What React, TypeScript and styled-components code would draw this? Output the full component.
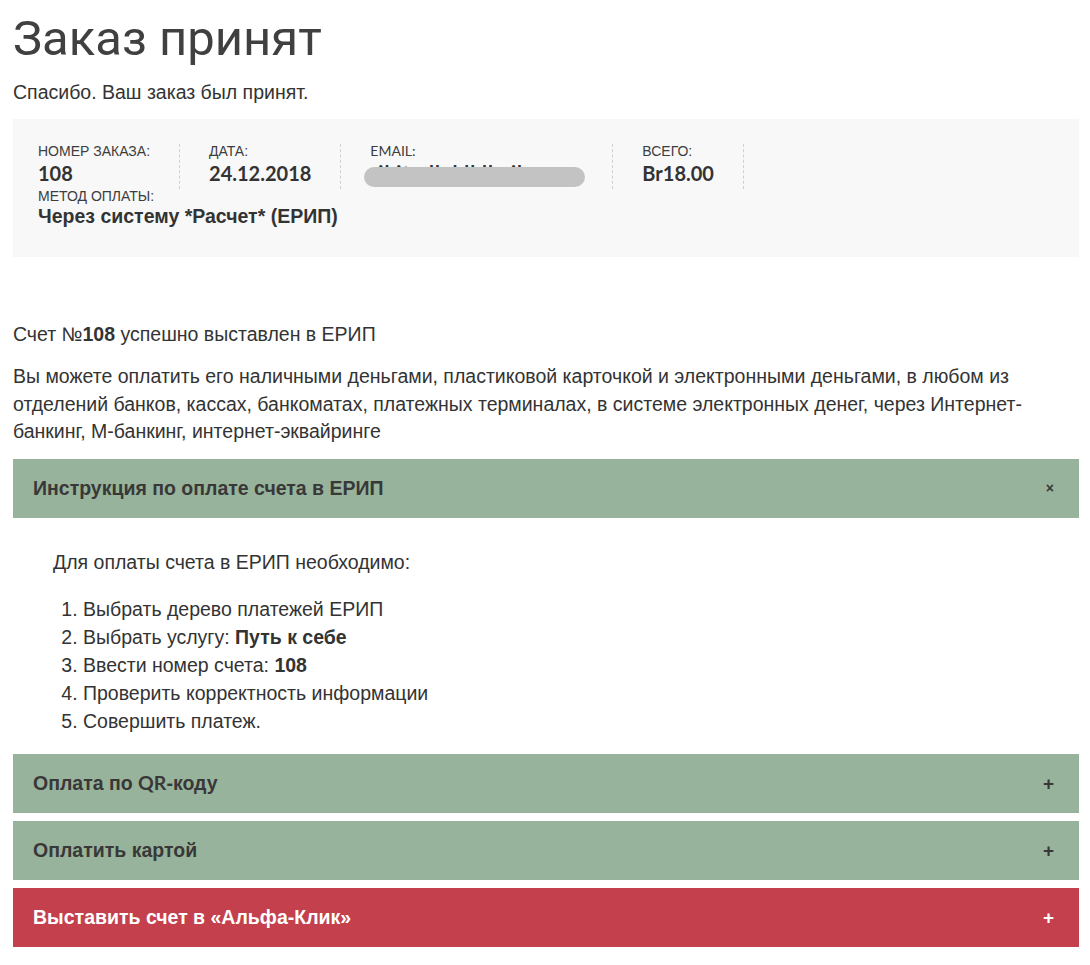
import React from "react";
import styled, { createGlobalStyle } from "styled-components";

const BODY_SIZE = "19.5px";

const Global = createGlobalStyle`
  html, body { margin: 0; padding: 0; background: #fff; }
  body { font-family: "Liberation Sans", Arial, sans-serif; color: #333; }
  * { box-sizing: border-box; }
`;

const Page = styled.div`
  padding: 6px 11px 16px 13px;
`;

const Latin = styled.span<{ $size?: number }>`
  font-family: Lato, sans-serif;
  font-size: ${(p) => (p.$size ? `${p.$size}px` : "inherit")};
`;

const Title = styled.h1`
  margin: 0;
  font-family: Roboto, "Liberation Sans", sans-serif;
  font-weight: 400;
  font-size: 49px;
  line-height: 65px;
  color: #404040;
`;

const Lead = styled.p`
  margin: 8px 0 14px;
  font-size: ${BODY_SIZE};
  line-height: 26px;
  color: #333;
`;

const DetailsBox = styled.div`
  background: #f8f8f8;
  padding: 25px 25px 0;
  height: 138px;
`;

const DetailsList = styled.ul`
  list-style: none;
  margin: 0;
  padding: 0;
  display: flex;
  flex-wrap: wrap;
`;

const DetailItem = styled.li<{ $last?: boolean; $full?: boolean }>`
  display: flex;
  flex-direction: column;
  padding-right: ${(p) => (p.$last ? "0" : "29px")};
  margin-right: ${(p) => (p.$last ? "0" : "29px")};
  border-right: ${(p) => (p.$last ? "none" : "1px dashed #d3ced2")};
  flex-basis: ${(p) => (p.$full ? "100%" : "auto")};
`;

const DetailLabel = styled.span`
  font-size: 14px;
  line-height: 14px;
  text-transform: uppercase;
  color: #3d3d3d;
`;

const DetailValue = styled.strong<{ $tight?: boolean }>`
  font-size: 19.5px;
  line-height: ${(p) => (p.$tight ? "27px" : "30px")};
  font-weight: 700;
  color: #333;
`;

const Blurred = styled.span`
  position: relative;
  display: inline-block;
  vertical-align: top;
  width: 213px;
  height: 30px;
`;

const BlurClip = styled.span`
  position: absolute;
  left: 0;
  top: 0;
  width: 213px;
  height: 30px;
  overflow: hidden;
`;

const HiddenMail = styled.span`
  position: absolute;
  left: 8px;
  top: 0;
  font-family: Lato, sans-serif;
  font-size: 20px;
  letter-spacing: 1px;
  color: #333;
  white-space: nowrap;
`;

const BlurBar = styled.span`
  position: absolute;
  left: -6px;
  top: 9px;
  width: 221px;
  height: 20px;
  border-radius: 10px;
  background: #c3c3c3;
`;

const Notice = styled.p`
  margin: 63px 0 15px;
  font-size: ${BODY_SIZE};
  line-height: 28px;
  color: #333;
  b { font-weight: 700; }
`;

const Para = styled.p`
  margin: 0 0 13px;
  font-size: ${BODY_SIZE};
  line-height: 27.5px;
  color: #333;
`;

const Accordion = styled.div`
  display: flex;
  flex-direction: column;
  gap: 8px;
`;

const Section = styled.section``;

const Header = styled.div<{ $tone: "green" | "red" }>`
  display: flex;
  align-items: center;
  justify-content: space-between;
  height: 59px;
  padding: 0 25px 0 20px;
  background: ${(p) => (p.$tone === "red" ? "#c3404c" : "#98b39b")};
  color: ${(p) => (p.$tone === "red" ? "#fff" : "#383838")};
  font-family: "Liberation Sans", Arial, sans-serif;
  font-weight: 700;
  font-size: 19.5px;
  cursor: pointer;
`;

const Sign = styled.span<{ $small?: boolean }>`
  font-family: "Liberation Sans", Arial, sans-serif;
  font-weight: 700;
  font-size: ${(p) => (p.$small ? "14px" : "19px")};
  line-height: 1;
`;

const Body = styled.div`
  padding: 30px 0 11px 40px;
  font-size: ${BODY_SIZE};
  color: #333;
`;

const BodyIntro = styled.p`
  margin: 0 0 19px;
  line-height: 28px;
`;

const Steps = styled.ol`
  margin: 0;
  padding-left: 30px;
  li { line-height: 28px; }
  b { font-weight: 700; }
`;

export default function App() {
  return (
    <Page>
      <Global />
      <Title>Заказ принят</Title>
      <Lead>Спасибо. Ваш заказ был принят.</Lead>
      <DetailsBox>
        <DetailsList>
          <DetailItem>
            <DetailLabel>Номер заказа:</DetailLabel>
            <DetailValue>
              <Latin $size={20}>108</Latin>
            </DetailValue>
          </DetailItem>
          <DetailItem>
            <DetailLabel>Дата:</DetailLabel>
            <DetailValue>
              <Latin $size={20}>24.12.2018</Latin>
            </DetailValue>
          </DetailItem>
          <DetailItem>
            <DetailLabel>
              <Latin>Email:</Latin>
            </DetailLabel>
            <DetailValue>
              <Blurred>
                <BlurClip>
                  <HiddenMail>il it ulk l ll ll ail</HiddenMail>
                </BlurClip>
                <BlurBar />
              </Blurred>
            </DetailValue>
          </DetailItem>
          <DetailItem>
            <DetailLabel>Всего:</DetailLabel>
            <DetailValue>
              <Latin $size={20}>Br18.00</Latin>
            </DetailValue>
          </DetailItem>
          <DetailItem $last $full>
            <DetailLabel>Метод оплаты:</DetailLabel>
            <DetailValue $tight>Через систему *Расчет* (ЕРИП)</DetailValue>
          </DetailItem>
        </DetailsList>
      </DetailsBox>
      <Notice>
        Счет №<b>108</b> успешно выставлен в ЕРИП
      </Notice>
      <Para>
        Вы можете оплатить его наличными деньгами, пластиковой карточкой и электронными деньгами, в любом из
        отделений банков, кассах, банкоматах, платежных терминалах, в системе электронных денег, через Интернет-банкинг,
        М-банкинг, интернет-эквайринге
      </Para>
      <Accordion>
        <Section>
          <Header $tone="green">
            <span>Инструкция по оплате счета в ЕРИП</span>
            <Sign $small>×</Sign>
          </Header>
          <Body>
            <BodyIntro>Для оплаты счета в ЕРИП необходимо:</BodyIntro>
            <Steps>
              <li>Выбрать дерево платежей ЕРИП</li>
              <li>
                Выбрать услугу: <b>Путь к себе</b>
              </li>
              <li>
                Ввести номер счета: <b>108</b>
              </li>
              <li>Проверить корректность информации</li>
              <li>Совершить платеж.</li>
            </Steps>
          </Body>
        </Section>
        <Section>
          <Header $tone="green">
            <span>
              Оплата по <Latin>QR</Latin>-коду
            </span>
            <Sign>+</Sign>
          </Header>
        </Section>
        <Section>
          <Header $tone="green">
            <span>Оплатить картой</span>
            <Sign>+</Sign>
          </Header>
        </Section>
        <Section>
          <Header $tone="red">
            <span>Выставить счет в «Альфа-Клик»</span>
            <Sign>+</Sign>
          </Header>
        </Section>
      </Accordion>
    </Page>
  );
}
